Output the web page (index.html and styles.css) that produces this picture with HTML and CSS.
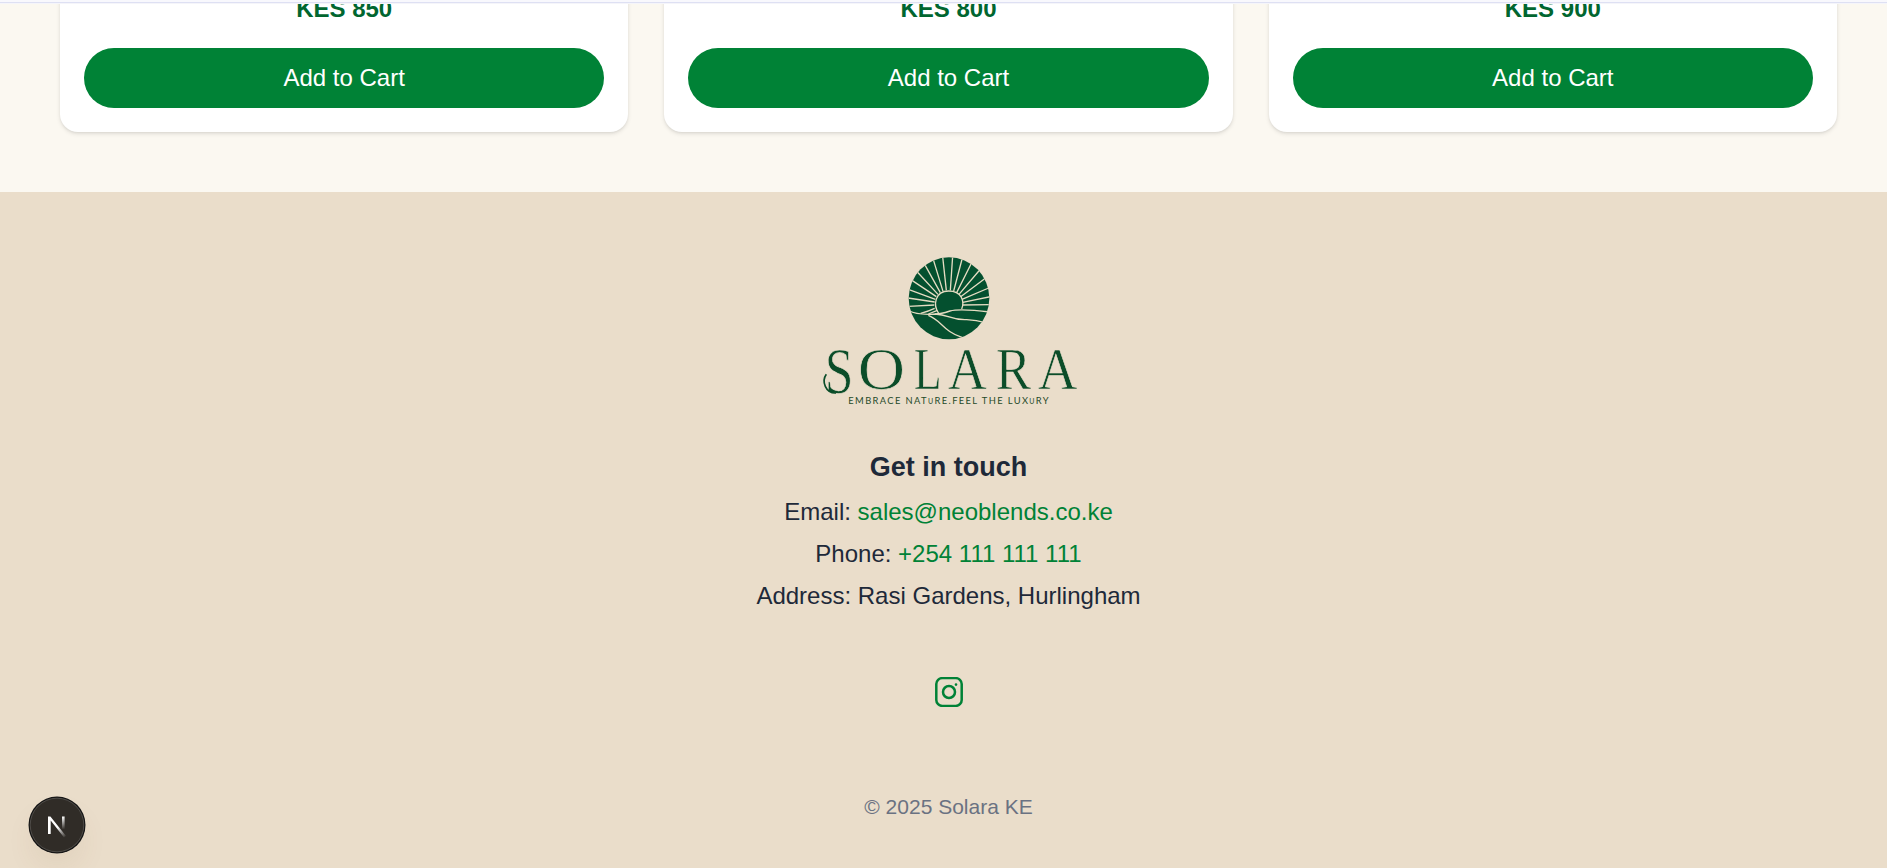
FILE: index.html
```html
<!DOCTYPE html>
<html lang="en">
<head>
<meta charset="utf-8">
<title>Solara KE</title>
<link rel="stylesheet" href="styles.css">
</head>
<body>
<div class="page">
  <header class="topbar"></header>
  <main class="products">
    <article class="card"><p class="price">KES 850</p><button class="add">Add to Cart</button></article>
    <article class="card"><p class="price">KES 800</p><button class="add">Add to Cart</button></article>
    <article class="card"><p class="price">KES 900</p><button class="add">Add to Cart</button></article>
  </main>
  <footer class="footer">
    <svg class="logo" viewBox="0 0 891 540" role="img" aria-label="Solara">
      <defs><clipPath id="disc"><ellipse cx="447" cy="175" rx="121" ry="123"/></clipPath></defs>
      <g clip-path="url(#disc)">
        <rect x="320" y="45" width="255" height="260" fill="#04502f"/>
        <g class="rays">
          <path d="M326 199L403 195M324 174L404 186M327 149L406 178M336 121L409 170M352 96L414 163M374 73L421 158M400 59L429 154M428 50L439 151M458 48L451 151M487 54L461 153M516 66L470 158M539 90L477 163M556 115L482 170M566 144L486 178M571 170L488 187M571 194L488 195"/>
          <path d="M416 220C399 196 404 153 446 153C486 153 494 185 485 207"/>
          <path d="M328 213Q345 222 385 223Q420 224 450 213Q480 205 570 216"/>
          <path d="M362 220Q385 214 404 205M385 222L412 211"/>
          <path d="M385 226C425 241 430 275 486 292"/>
          <path d="M405 222C450 224 450 241 500 239Q530 241 556 248"/>
        </g>
      </g>
      <g class="wordmark">
        <text x="74" y="459" font-size="196" textLength="86" lengthAdjust="spacingAndGlyphs">S</text>
        <text x="173" y="446" textLength="142" lengthAdjust="spacingAndGlyphs">O</text>
        <text x="341" y="446" textLength="84" lengthAdjust="spacingAndGlyphs">L</text>
        <text x="443" y="446" textLength="117" lengthAdjust="spacingAndGlyphs">A</text>
        <text x="587" y="446" textLength="106" lengthAdjust="spacingAndGlyphs">R</text>
        <text x="713" y="446" textLength="119" lengthAdjust="spacingAndGlyphs">A</text>
      </g>
      <path class="swash" d="M108 459C76 460 64 424 79 403"/>
      <text class="tagline" x="145" y="491" textLength="605">EMBRACE NAT<tspan class="small">U</tspan>RE.FEEL THE LUX<tspan class="small">U</tspan>RY</text>
    </svg>
    <h3 class="heading">Get in touch</h3>
    <address class="contact">
      <p>Email: <a>sales@neoblends.co.ke</a></p>
      <p>Phone: <a>+254 111 111 111</a></p>
      <p>Address: Rasi Gardens, Hurlingham</p>
    </address>
    <svg class="instagram" viewBox="0 0 28 30">
      <rect x="1.3" y="1.1" width="25.4" height="27.8" rx="6"/>
      <circle cx="14" cy="15" r="6"/>
      <circle class="dot" cx="21" cy="7.6" r="1.3"/>
    </svg>
    <p class="copyright">© 2025 Solara KE</p>
  </footer>
</div>
<div class="devtools">
  <svg viewBox="0 0 58 58">
    <defs>
      <linearGradient id="diag" gradientUnits="userSpaceOnUse" x1="30" y1="31" x2="38" y2="41"><stop stop-color="#fff"/><stop offset="1" stop-color="#fff" stop-opacity="0"/></linearGradient>
      <linearGradient id="stem" x1="0" y1="0" x2="0" y2="1"><stop stop-color="#fff"/><stop offset="1" stop-color="#fff" stop-opacity="0"/></linearGradient>
    </defs>
    <circle cx="29" cy="29" r="28.5" fill="#151515"/>
    <circle cx="29" cy="29" r="26.8" fill="#302c27" stroke="#504d49"/>
    <path d="M20 38V20.5H22.4L38 40L36 41.5L22.7 24.5V38Z" fill="url(#diag)"/>
    <rect x="34" y="20.5" width="2.6" height="13" fill="url(#stem)"/>
  </svg>
</div>
</body>
</html>
```
FILE: styles.css
```css
* { box-sizing: border-box; margin: 0; }
html, body { overflow: hidden; }
body {
  height: 868px;
  background: #eaddca;
  font-family: "Liberation Sans", Arial, sans-serif;
}
.page { width: 1897px; height: 868px; display: flex; flex-direction: column; }
.topbar {
  height: 4px;
  flex: none;
  background: linear-gradient(#f8f8fd 2px, #dee0f3 2px, #dee0f3 3px, #f5f5fa 3px);
}
.products {
  height: 188px;
  flex: none;
  overflow: hidden;
  display: grid;
  grid-template-columns: repeat(3, 1fr);
  grid-template-rows: 128px;
  align-items: end;
  gap: 36px;
  padding: 0 60px 60px;
  background: #fbf8f1;
}
.card {
  height: 180px;
  display: flex;
  flex-direction: column;
  justify-content: flex-end;
  gap: 21px;
  padding: 24px;
  border-radius: 18px;
  background: #fff;
  box-shadow: 0 1.5px 4.5px rgba(0, 0, 0, .1), 0 1.5px 3px -1.5px rgba(0, 0, 0, .1);
}
.price { color: #016630; font-size: 24px; line-height: 36px; font-weight: 700; text-align: center; }
.add {
  height: 60px;
  flex: none;
  border: 0;
  border-radius: 30px;
  background: #008236;
  color: #fff;
  font: 24px/36px "Liberation Sans", Arial, sans-serif;
}
.footer {
  flex: 1;
  display: flex;
  flex-direction: column;
  align-items: center;
  padding-top: 48px;
  background: #eaddca;
  color: #1e2939;
}
.logo { width: 297px; height: 180px; flex: none; }
.rays { fill: none; stroke: #e5dcc2; stroke-width: 4; }
.wordmark {
  font-family: "Liberation Serif", serif;
  font-size: 180px;
  fill: #0b4d29;
  stroke: #eaddca;
  stroke-width: 2;
}
.swash { fill: none; stroke: #0b4d29; stroke-width: 5; }
.tagline { font-family: Lato, sans-serif; font-size: 28px; letter-spacing: 4px; fill: #1f4a29; }
.small { font-size: 21px; }
.heading { margin-top: 26px; font-size: 27px; line-height: 42px; }
.contact {
  margin-top: 6px;
  display: flex;
  flex-direction: column;
  gap: 6px;
  font-size: 24px;
  line-height: 36px;
  font-style: normal;
  text-align: center;
}
.contact a { color: #008236; }
.instagram {
  width: 28px;
  height: 30px;
  margin-top: 63px;
  fill: none;
  stroke: #008236;
  stroke-width: 2.5;
}
.instagram .dot { fill: #008236; stroke: none; }
.copyright { margin-top: 85px; color: #6a7282; font-size: 21px; line-height: 30px; }
.devtools {
  position: absolute;
  left: 28px;
  top: 796px;
  width: 58px;
  height: 58px;
  border-radius: 50%;
  box-shadow: 0 16px 32px -8px rgba(120, 80, 30, .12);
}
.devtools svg { display: block; }
```
